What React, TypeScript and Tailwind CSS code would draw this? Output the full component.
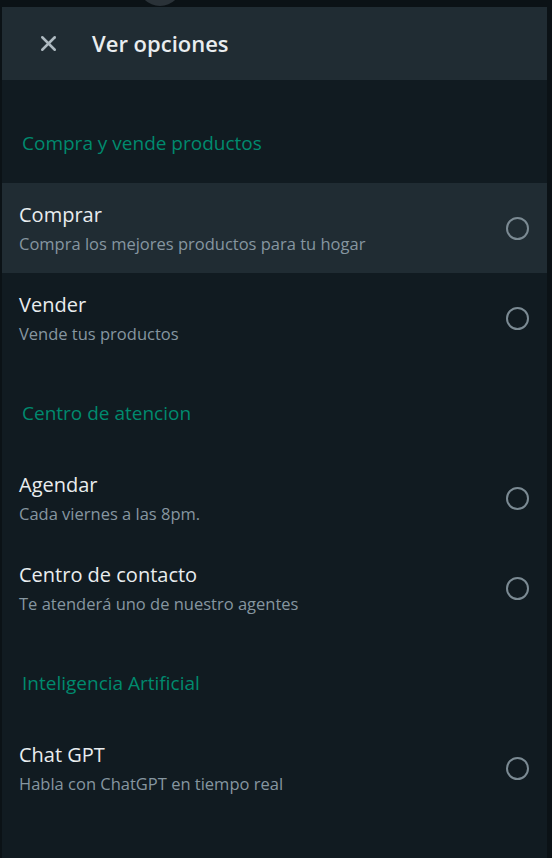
import { X } from 'lucide-react'

interface Option {
  title: string
  subtitle: string
  active?: boolean
}

interface Section {
  label: string
  options: Option[]
}

const sections: Section[] = [
  {
    label: 'Compra y vende productos',
    options: [
      { title: 'Comprar', subtitle: 'Compra los mejores productos para tu hogar', active: true },
      { title: 'Vender', subtitle: 'Vende tus productos' },
    ],
  },
  {
    label: 'Centro de atencion',
    options: [
      { title: 'Agendar', subtitle: 'Cada viernes a las 8pm.' },
      { title: 'Centro de contacto', subtitle: 'Te atenderá uno de nuestro agentes' },
    ],
  },
  {
    label: 'Inteligencia Artificial',
    options: [{ title: 'Chat GPT', subtitle: 'Habla con ChatGPT en tiempo real' }],
  },
]

function OptionRow({ option }: { option: Option }) {
  return (
    <div
      className={`flex h-[90px] items-center justify-between pl-[17px] pr-[18px] ${
        option.active ? 'bg-[#202c33]' : ''
      }`}
    >
      <div className="flex flex-col">
        <span className="text-[20px] leading-[26px] text-[#e9edef]">{option.title}</span>
        <span className="mt-[5px] text-[16.5px] leading-[22px] text-[#8696a0]">{option.subtitle}</span>
      </div>
      <div className="h-[23px] w-[23px] rounded-full border-2 border-[#7b8a93]" />
    </div>
  )
}

export default function App() {
  return (
    <div
      className="flex h-[858px] w-[552px] flex-col bg-[#0b1216]"
      style={{ fontFamily: '"Open Sans", "Noto Sans", sans-serif' }}
    >
      {/* top strip */}
      <div className="relative h-[7px] shrink-0 overflow-hidden">
        <div className="absolute left-[138px] top-[-38px] h-[44px] w-[44px] rounded-full bg-[#2a3238]" />
      </div>

      <div className="flex flex-1 pl-[2px] pr-[5px]">
        <div className="flex flex-1 flex-col bg-[#111b21]">
          {/* Header */}
          <div className="flex h-[73px] shrink-0 items-center bg-[#202c33]">
            <button className="ml-[33px] flex h-[26px] w-[26px] items-center justify-center text-[#aebac1]">
              <X className="h-[25px] w-[25px]" strokeWidth={2.4} />
            </button>
            <h1 className="ml-[31px] text-[22px] font-semibold text-[#e9edef]">Ver opciones</h1>
          </div>

          {/* List */}
          <div className="flex flex-col pt-[13px]">
            {sections.map((section) => (
              <div key={section.label} className="flex flex-col">
                <div className="flex h-[90px] items-center pl-[20px] pt-[10px]">
                  <span className="text-[19px] text-[#008a6e]">{section.label}</span>
                </div>
                {section.options.map((option) => (
                  <OptionRow key={option.title} option={option} />
                ))}
              </div>
            ))}
          </div>
        </div>
      </div>
    </div>
  )
}
